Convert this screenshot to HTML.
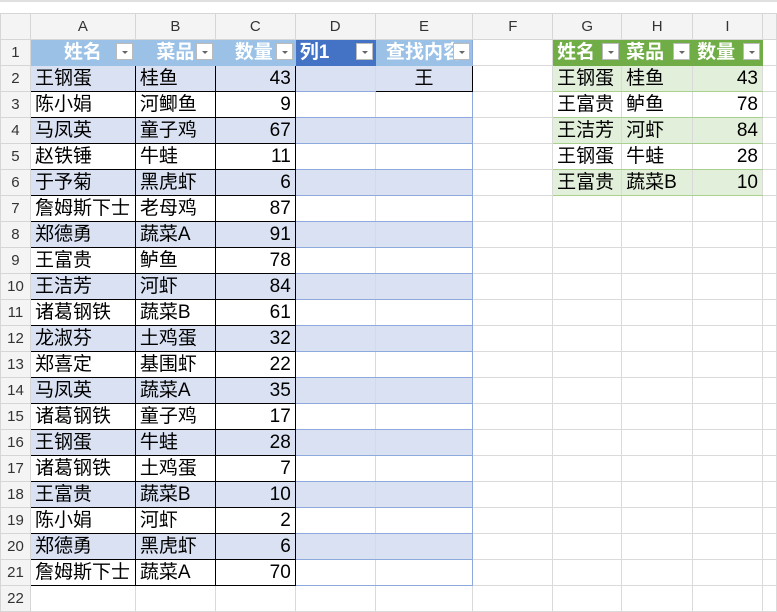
<!DOCTYPE html><html><head><meta charset="utf-8"><style>
body{margin:0;background:#fff;width:777px;height:602px;overflow:hidden;font-family:"Liberation Sans","Noto Sans CJK SC",sans-serif;}
.top{position:absolute;left:0;top:0;width:777px;height:13px;background:#fff;border-top:2px solid #e0e0e0;box-sizing:border-box}
table{position:absolute;left:0;top:13px;border-collapse:collapse;table-layout:fixed;font-size:19px;color:#000}
td{border:1px solid #dadada;padding:0 4px;white-space:nowrap;overflow:hidden;height:25px;line-height:25px;box-sizing:border-box}
tr.h td{height:25px;background:#f4f4f4;color:#333;font-size:15px;text-align:center;border-color:#d6d6d6}
td.r{background:#f4f4f4;color:#333;font-size:15px;text-align:center;padding:0;border-color:#d6d6d6}
.k{border:1px solid #000}
.b{background:#d9e1f2}
.n{text-align:right}
.c{text-align:center}
.hb{background:#9bc2e6;color:#fff;font-weight:bold;position:relative;text-align:center;border-color:#9bc2e6}
.hd{background:#4472c4;color:#fff;font-weight:bold;position:relative;text-align:left;border-color:#4472c4}
.hg{background:#70ad47;color:#fff;font-weight:bold;position:relative;text-align:left;border-color:#70ad47}
.dd{position:absolute;right:2px;top:3px;width:17px;height:17px;background:#fff;border:1px solid #bbb;box-sizing:border-box}
.dd:after{content:"";position:absolute;left:5px;top:7px;border-left:3px solid transparent;border-right:3px solid transparent;border-top:3px solid #666}
.l{border-top-color:#8ea9db;border-bottom-color:#8ea9db}
.lr{border-right-color:#8ea9db}
.g{background:#e2efda}
.gl{border-top-color:#a9d08e;border-bottom-color:#a9d08e}
</style></head><body><div class="top"></div>
<table>
<colgroup><col style="width:30px"><col style="width:105px"><col style="width:80px"><col style="width:80px"><col style="width:80px"><col style="width:98px"><col style="width:80px"><col style="width:69px"><col style="width:71px"><col style="width:70px"><col style="width:14px"></colgroup>
<tr class="h"><td style="background:#f4f4f4"></td><td>A</td><td>B</td><td>C</td><td>D</td><td>E</td><td>F</td><td>G</td><td>H</td><td>I</td><td></td></tr>
<tr><td class="r">1</td><td class="hb">姓名<span class="dd"></span></td><td class="hb">菜品<span class="dd"></span></td><td class="hb" style="text-align:right;padding-right:22px">数量<span class="dd"></span></td><td class="hd">列1<span class="dd"></span></td><td class="hb lr">查找内容<span class="dd"></span></td><td></td><td class="hg">姓名<span class="dd"></span></td><td class="hg">菜品<span class="dd"></span></td><td class="hg">数量<span class="dd"></span></td><td></td></tr>
<tr><td class="r">2</td><td class="k b">王钢蛋</td><td class="k b">桂鱼</td><td class="k b n">43</td><td class="b l"></td><td class="k b c">王</td><td></td><td class="g gl">王钢蛋</td><td class="g gl">桂鱼</td><td class="g gl n">43</td><td></td></tr>
<tr><td class="r">3</td><td class="k">陈小娟</td><td class="k">河鲫鱼</td><td class="k n">9</td><td class="l"></td><td class="l lr"></td><td></td><td class="gl">王富贵</td><td class="gl">鲈鱼</td><td class="gl n">78</td><td></td></tr>
<tr><td class="r">4</td><td class="k b">马凤英</td><td class="k b">童子鸡</td><td class="k b n">67</td><td class="b l"></td><td class="b l lr"></td><td></td><td class="g gl">王洁芳</td><td class="g gl">河虾</td><td class="g gl n">84</td><td></td></tr>
<tr><td class="r">5</td><td class="k">赵铁锤</td><td class="k">牛蛙</td><td class="k n">11</td><td class="l"></td><td class="l lr"></td><td></td><td class="gl">王钢蛋</td><td class="gl">牛蛙</td><td class="gl n">28</td><td></td></tr>
<tr><td class="r">6</td><td class="k b">于予菊</td><td class="k b">黑虎虾</td><td class="k b n">6</td><td class="b l"></td><td class="b l lr"></td><td></td><td class="g gl">王富贵</td><td class="g gl">蔬菜B</td><td class="g gl n">10</td><td></td></tr>
<tr><td class="r">7</td><td class="k">詹姆斯下士</td><td class="k">老母鸡</td><td class="k n">87</td><td class="l"></td><td class="l lr"></td><td></td><td></td><td></td><td></td><td></td></tr>
<tr><td class="r">8</td><td class="k b">郑德勇</td><td class="k b">蔬菜A</td><td class="k b n">91</td><td class="b l"></td><td class="b l lr"></td><td></td><td></td><td></td><td></td><td></td></tr>
<tr><td class="r">9</td><td class="k">王富贵</td><td class="k">鲈鱼</td><td class="k n">78</td><td class="l"></td><td class="l lr"></td><td></td><td></td><td></td><td></td><td></td></tr>
<tr><td class="r">10</td><td class="k b">王洁芳</td><td class="k b">河虾</td><td class="k b n">84</td><td class="b l"></td><td class="b l lr"></td><td></td><td></td><td></td><td></td><td></td></tr>
<tr><td class="r">11</td><td class="k">诸葛钢铁</td><td class="k">蔬菜B</td><td class="k n">61</td><td class="l"></td><td class="l lr"></td><td></td><td></td><td></td><td></td><td></td></tr>
<tr><td class="r">12</td><td class="k b">龙淑芬</td><td class="k b">土鸡蛋</td><td class="k b n">32</td><td class="b l"></td><td class="b l lr"></td><td></td><td></td><td></td><td></td><td></td></tr>
<tr><td class="r">13</td><td class="k">郑喜定</td><td class="k">基围虾</td><td class="k n">22</td><td class="l"></td><td class="l lr"></td><td></td><td></td><td></td><td></td><td></td></tr>
<tr><td class="r">14</td><td class="k b">马凤英</td><td class="k b">蔬菜A</td><td class="k b n">35</td><td class="b l"></td><td class="b l lr"></td><td></td><td></td><td></td><td></td><td></td></tr>
<tr><td class="r">15</td><td class="k">诸葛钢铁</td><td class="k">童子鸡</td><td class="k n">17</td><td class="l"></td><td class="l lr"></td><td></td><td></td><td></td><td></td><td></td></tr>
<tr><td class="r">16</td><td class="k b">王钢蛋</td><td class="k b">牛蛙</td><td class="k b n">28</td><td class="b l"></td><td class="b l lr"></td><td></td><td></td><td></td><td></td><td></td></tr>
<tr><td class="r">17</td><td class="k">诸葛钢铁</td><td class="k">土鸡蛋</td><td class="k n">7</td><td class="l"></td><td class="l lr"></td><td></td><td></td><td></td><td></td><td></td></tr>
<tr><td class="r">18</td><td class="k b">王富贵</td><td class="k b">蔬菜B</td><td class="k b n">10</td><td class="b l"></td><td class="b l lr"></td><td></td><td></td><td></td><td></td><td></td></tr>
<tr><td class="r">19</td><td class="k">陈小娟</td><td class="k">河虾</td><td class="k n">2</td><td class="l"></td><td class="l lr"></td><td></td><td></td><td></td><td></td><td></td></tr>
<tr><td class="r">20</td><td class="k b">郑德勇</td><td class="k b">黑虎虾</td><td class="k b n">6</td><td class="b l"></td><td class="b l lr"></td><td></td><td></td><td></td><td></td><td></td></tr>
<tr><td class="r">21</td><td class="k">詹姆斯下士</td><td class="k">蔬菜A</td><td class="k n">70</td><td class="l"></td><td class="l lr"></td><td></td><td></td><td></td><td></td><td></td></tr>
<tr><td class="r">22</td><td></td><td></td><td></td><td></td><td></td><td></td><td></td><td></td><td></td><td></td></tr>
</table>
</body></html>
